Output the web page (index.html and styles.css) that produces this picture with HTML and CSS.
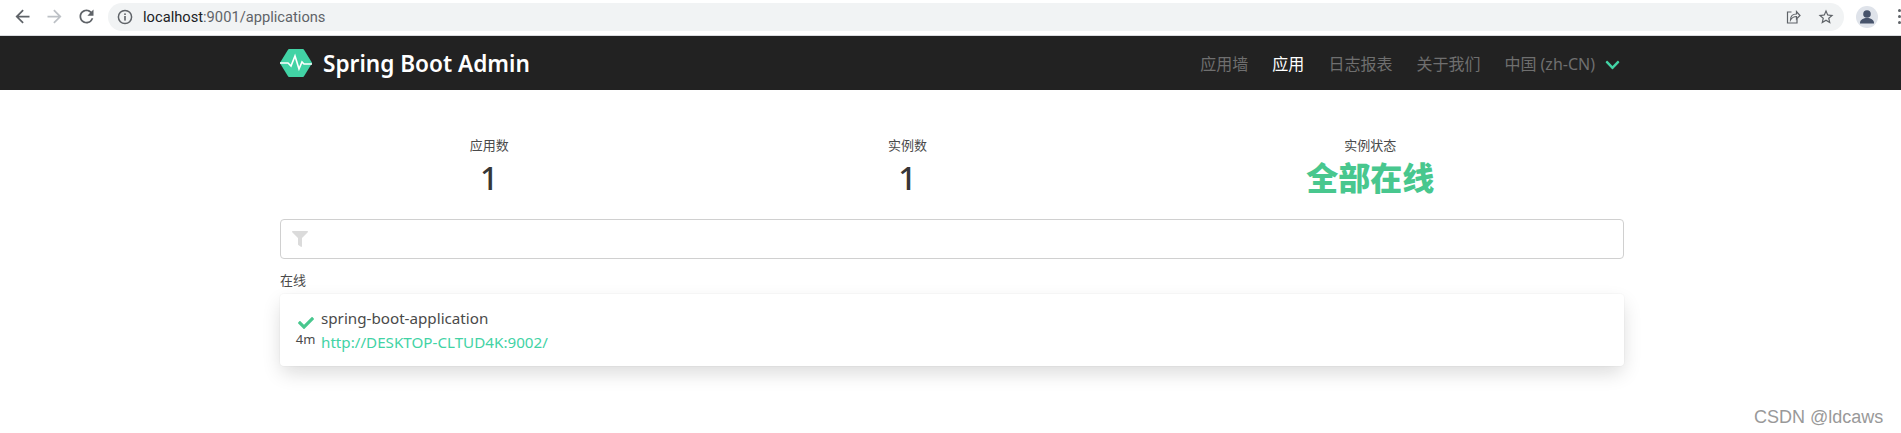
FILE: index.html
```html
<!DOCTYPE html>
<html lang="en">

<head>
    <meta charset="UTF-8">
    <meta name="viewport" content="width=device-width, initial-scale=1.0">
    <title>Spring Boot Admin</title>
    <link rel="stylesheet" href="styles.css">
</head>

<body>
    <div class="toolbar">
        <span class="tool-btn">
            <svg viewBox="0 0 24 24"><path d="M20 11H7.83l5.59-5.59L12 4l-8 8 8 8 1.41-1.41L7.83 13H20v-2z"/></svg>
        </span>
        <span class="tool-btn disabled">
            <svg viewBox="0 0 24 24"><path d="M4 11h12.17l-5.59-5.59L12 4l8 8-8 8-1.41-1.41L16.17 13H4v-2z"/></svg>
        </span>
        <span class="tool-btn">
            <svg viewBox="0 0 24 24"><path d="M17.65 6.35A7.958 7.958 0 0 0 12 4c-4.42 0-7.99 3.58-7.99 8s3.57 8 7.99 8c3.73 0 6.84-2.55 7.73-6h-2.08A5.99 5.99 0 0 1 12 18c-3.31 0-6-2.69-6-6s2.69-6 6-6c1.66 0 3.14.69 4.22 1.78L13 11h7V4l-2.35 2.35z"/></svg>
        </span>
        <div class="address">
            <svg class="info-icon" viewBox="0 0 16 16">
                <circle cx="8" cy="8" r="6.6" fill="none" stroke="#5f6368" stroke-width="1.5"/>
                <rect x="7.2" y="7" width="1.6" height="4.6" fill="#5f6368"/>
                <rect x="7.2" y="4.4" width="1.6" height="1.6" fill="#5f6368"/>
            </svg>
            <span class="url"><span class="host">localhost</span>:9001/applications</span>
            <svg class="share-icon" viewBox="0 0 16 16" fill="none" stroke="#5f6368" stroke-width="1.2">
                <path d="M6.5 3H2.5v11h9.5v-4"/>
                <path d="M5.5 11c0-4 2.5-6 6-6V2.500l3.500 4-3.500 3.500V7.500c-2.500 0-4.500 1-6 3.500z"/>
            </svg>
            <svg class="star-icon" viewBox="0 0 24 24"><path fill="#5f6368" d="M22 9.240l-7.190-.620L12 2 9.190 8.630 2 9.240l5.460 4.730L5.820 21 12 17.270 18.180 21l-1.630-7.030L22 9.240zM12 15.400l-3.760 2.270 1-4.280-3.320-2.880 4.380-.380L12 6.100l1.710 4.040 4.380.380-3.320 2.880 1 4.280L12 15.400z"/></svg>
        </div>
        <span class="avatar">
            <svg viewBox="0 0 22 22"><circle cx="11" cy="8" r="3.800" fill="#47536b"/><path fill="#47536b" d="M4 17c0-3.500 3.500-5 7-5s7 1.500 7 5v.5H4z"/></svg>
        </span>
        <span class="menu-dots"><i></i><i></i><i></i></span>
    </div>

    <nav class="navbar">
        <a class="brand">
            <svg class="brand-logo" viewBox="0 0 32 28">
                <path fill="#42d3a5" stroke="#42d3a5" stroke-width="2" stroke-linejoin="round" d="M9 1h14l8 13-8 13H9L1 14z"/>
                <path fill="none" stroke="#fff" stroke-width="1.600" d="M0 14h8l3 3 4-10 4 13 3-7 2 2h8"/>
            </svg>
            <span>Spring Boot Admin</span>
        </a>
        <div class="nav-menu">
            <a class="nav-item">应用墙</a>
            <a class="nav-item active">应用</a>
            <a class="nav-item">日志报表</a>
            <a class="nav-item">关于我们</a>
            <a class="nav-item lang">中国 (zh-CN)
                <svg class="chevron" viewBox="0 0 448 512"><path d="M207.029 381.476L12.686 187.132c-9.373-9.373-9.373-24.569 0-33.941l22.667-22.667c9.357-9.357 24.522-9.375 33.901-.04L224 284.505l154.745-154.021c9.379-9.335 24.544-9.317 33.901.04l22.667 22.667c9.373 9.373 9.373 24.569 0 33.941L240.971 381.476c-9.373 9.372-24.569 9.372-33.942 0z"/></svg>
            </a>
        </div>
    </nav>

    <main class="container">
        <div class="stats">
            <div class="stat">
                <p class="stat-label">应用数</p>
                <p class="stat-value">1</p>
            </div>
            <div class="stat">
                <p class="stat-label">实例数</p>
                <p class="stat-value">1</p>
            </div>
            <div class="stat">
                <p class="stat-label">实例状态</p>
                <p class="stat-value ok">全部在线</p>
            </div>
        </div>

        <div class="filter">
            <svg class="filter-icon" viewBox="0 0 512 512"><path d="M487.976 0H24.028C2.71 0-8.047 25.866 7.058 40.971L192 225.941V432c0 7.831 3.821 15.17 10.237 19.662l80 55.98C298.02 518.69 320 507.493 320 487.98V225.941l184.947-184.97C520.021 25.896 509.338 0 487.976 0z"/></svg>
        </div>

        <p class="group-title">在线</p>
        <div class="card">
            <div class="app-status">
                <svg class="check" viewBox="0 0 512 512"><path d="M173.898 439.404l-166.4-166.4c-9.997-9.997-9.997-26.206 0-36.204l36.203-36.204c9.997-10.998 26.207-9.998 36.204 0L192 312.69 432.095 72.596c9.997-9.997 26.207-9.997 36.204 0l36.203 36.204c9.997 9.997 9.997 26.206 0 36.204l-294.4 294.401c-9.998 9.997-26.207 9.997-36.204-.001z"/></svg>
                <small>4m</small>
            </div>
            <div class="app-info">
                <p>spring-boot-application</p>
                <a>http://DESKTOP-CLTUD4K:9002/</a>
            </div>
        </div>
    </main>

    <div class="watermark">CSDN @ldcaws</div>
</body>

</html>
```

FILE: styles.css
```css
* {
    box-sizing: border-box;
}

html,
body {
    height: 100%;
}

body {
    font-family: "Noto Sans", "Noto Sans CJK SC", sans-serif;
    background-color: #fff;
    color: #4a4a4a;
    margin: 0;
    padding: 0;
    overflow: hidden;
}

p {
    margin: 0;
}

/* browser bar */
.toolbar {
    display: flex;
    align-items: center;
    height: 36px;
    padding: 0 0 2px 6px;
    background-color: #fff;
    border-bottom: 1px solid #dadce0;
    overflow: hidden;
}

.tool-btn {
    display: flex;
    justify-content: center;
    width: 32px;
}

.tool-btn svg {
    width: 21px;
    height: 21px;
    fill: #5f6368;
}

.tool-btn.disabled svg {
    fill: #bdc1c6;
}

.address {
    display: flex;
    align-items: center;
    flex: 1;
    height: 28px;
    margin-left: 6px;
    padding: 0 9px;
    background-color: #f1f3f4;
    border-radius: 14px;
}

.info-icon {
    width: 16px;
    height: 16px;
}

.url {
    margin-left: 10px;
    font-family: Roboto, sans-serif;
    font-size: 14.7px;
    color: #5f6368;
}

.host {
    color: #202124;
}

.share-icon {
    width: 16px;
    height: 16px;
    margin-left: auto;
}

.star-icon {
    width: 18px;
    height: 18px;
    margin-left: 16px;
}

.avatar {
    width: 22px;
    height: 22px;
    margin-left: 12px;
    background-color: #dfe3ea;
    border-radius: 50%;
}

.avatar svg {
    display: block;
}

.menu-dots {
    display: flex;
    flex-direction: column;
    gap: 3px;
    margin-left: 20px;
}

.menu-dots i {
    display: block;
    width: 3px;
    height: 3px;
    background-color: #5f6368;
    border-radius: 50%;
}

/* navbar */
.navbar {
    display: flex;
    align-items: center;
    justify-content: space-between;
    width: 100%;
    height: 54px;
    padding: 0 269px 0 280px;
    background-color: #222;
}

.brand {
    display: flex;
    align-items: center;
    gap: 11px;
    color: #fff;
    font-size: 22.6px;
    font-weight: 600;
}

.brand-logo {
    width: 32px;
    height: 28px;
}

.nav-menu {
    display: flex;
    align-items: center;
}

.nav-item {
    display: flex;
    align-items: center;
    padding: 0 12px;
    font-size: 16px;
    color: #6f6f6f;
}

.nav-item.active {
    color: #fff;
}

.chevron {
    width: 15px;
    height: 16px;
    margin-top: 4px;
    margin-left: 10px;
    fill: #42d3a5;
}

/* page */
.container {
    width: 1344px;
    margin-left: 280px;
    padding-top: 46px;
    padding-bottom: 40px;
}

.stats {
    display: flex;
    text-align: center;
}

.stat {
    flex: 1 1 auto;
}

.stat-label {
    font-size: 13px;
    line-height: 18px;
}

.stat-value {
    margin-top: 6px;
    font-size: 32px;
    font-weight: 500;
    line-height: 36px;
    color: #363636;
}

.stat-value.ok {
    font-weight: 900;
    color: #48c78e;
}

.filter {
    display: flex;
    align-items: center;
    height: 40px;
    margin-top: 23px;
    padding-left: 11px;
    border: 1px solid #d0d0d0;
    border-radius: 4px;
}

.filter-icon {
    width: 16px;
    height: 16px;
    fill: #dbdbdb;
}

.group-title {
    margin-top: 12px;
    font-size: 13px;
    line-height: 18px;
}

.card {
    display: flex;
    gap: 6px;
    height: 72px;
    margin-top: 5px;
    padding: 12px 16px;
    background-color: #fff;
    border-radius: 4px;
    box-shadow: 0 8px 20px -2px rgba(10, 10, 10, 0.16), 0 0 0 1px rgba(10, 10, 10, 0.02);
}

.app-status {
    display: flex;
    flex-direction: column;
    align-items: center;
    width: 19px;
}

.check {
    width: 16px;
    height: 16px;
    margin-top: 9px;
    fill: #48c78e;
}

.app-status small {
    font-size: 13px;
    line-height: 14px;
    margin-top: 1px;
}

.app-info {
    font-size: 15.2px;
    line-height: 24px;
}

.app-info a {
    color: #42d3a5;
}

.watermark {
    position: absolute;
    left: 1754px;
    top: 405px;
    font-family: "Liberation Sans", sans-serif;
    font-size: 18px;
    line-height: 24px;
    color: #999;
}
```
